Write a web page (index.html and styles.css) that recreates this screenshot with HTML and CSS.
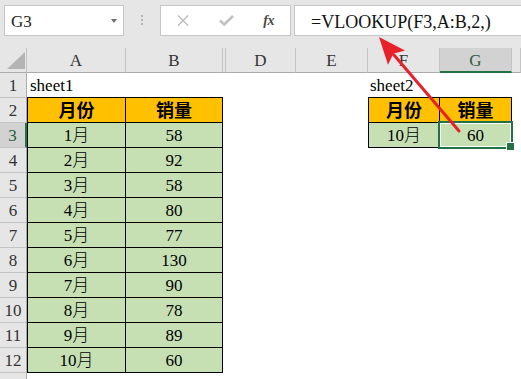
FILE: index.html
```html
<!DOCTYPE html>
<html lang="zh">
<head>
<meta charset="utf-8">
<title>VLOOKUP</title>
<link rel="stylesheet" href="styles.css">
</head>
<body>
<div class="app">
  <div class="fbar">
    <div class="namebox"><span class="nb-text">G3</span><span class="nb-arrow"></span></div>
    <div class="grip"><i></i><i></i><i></i></div>
    <div class="btns">
      <span class="slot"><svg width="12" height="11" viewBox="0 0 12 11"><path d="M1 0.5L11 10.5M11 0.5L1 10.5" stroke="#bdbdbd" stroke-width="1.4" fill="none"/></svg></span>
      <span class="slot"><svg width="15" height="11" viewBox="0 0 15 11"><path d="M1 5.5L5.2 9.5L14 1" stroke="#c2c2c2" stroke-width="2.6" fill="none"/></svg></span>
      <span class="slot fx">fx</span>
    </div>
    <div class="formula">=VLOOKUP(F3,A:B,2,)</div>
  </div>

  <div class="sheet">
    <div class="row colhead">
      <div class="rh corner"><svg width="18" height="17" viewBox="0 0 18 17"><path d="M0 17L18 17L18 0Z" fill="#b4b4b4"/></svg></div>
      <div class="hd ca">A</div>
      <div class="hd cb">B</div>
      <div class="hd cc"></div>
      <div class="hd cd">D</div>
      <div class="hd ce">E</div>
      <div class="hd cf">F</div>
      <div class="hd cg hsel">G</div>
      <div class="hd cx"></div>
    </div>

    <div class="row">
      <div class="rh">1</div>
      <div class="c ca tb lt">sheet1</div>
      <div class="c cb tb"></div>
      <div class="c cc"></div><div class="c cd"></div><div class="c ce"></div>
      <div class="c cf tb lt2">sheet2</div>
      <div class="c cg tb"></div>
      <div class="c cx"></div>
    </div>

    <div class="row">
      <div class="rh">2</div>
      <div class="c ca t tl h">月份</div>
      <div class="c cb t h">销量</div>
      <div class="c cc"></div><div class="c cd"></div><div class="c ce"></div>
      <div class="c cf t tl h">月份</div>
      <div class="c cg t h">销量</div>
      <div class="c cx"></div>
    </div>

    <div class="row">
      <div class="rh rsel">3</div>
      <div class="c ca t tl g">1月</div>
      <div class="c cb t g">58</div>
      <div class="c cc"></div><div class="c cd"></div><div class="c ce"></div>
      <div class="c cf t tl g">10月</div>
      <div class="c cg t g active">60<span class="selbox"></span></div>
      <div class="c cx"></div>
    </div>

    <div class="row"><div class="rh">4</div><div class="c ca t tl g">2月</div><div class="c cb t g">92</div><div class="c cc"></div><div class="c cd"></div><div class="c ce"></div><div class="c cf"></div><div class="c cg"></div><div class="c cx"></div></div>
    <div class="row"><div class="rh">5</div><div class="c ca t tl g">3月</div><div class="c cb t g">58</div><div class="c cc"></div><div class="c cd"></div><div class="c ce"></div><div class="c cf"></div><div class="c cg"></div><div class="c cx"></div></div>
    <div class="row"><div class="rh">6</div><div class="c ca t tl g">4月</div><div class="c cb t g">80</div><div class="c cc"></div><div class="c cd"></div><div class="c ce"></div><div class="c cf"></div><div class="c cg"></div><div class="c cx"></div></div>
    <div class="row"><div class="rh">7</div><div class="c ca t tl g">5月</div><div class="c cb t g">77</div><div class="c cc"></div><div class="c cd"></div><div class="c ce"></div><div class="c cf"></div><div class="c cg"></div><div class="c cx"></div></div>
    <div class="row"><div class="rh">8</div><div class="c ca t tl g">6月</div><div class="c cb t g">130</div><div class="c cc"></div><div class="c cd"></div><div class="c ce"></div><div class="c cf"></div><div class="c cg"></div><div class="c cx"></div></div>
    <div class="row"><div class="rh">9</div><div class="c ca t tl g">7月</div><div class="c cb t g">90</div><div class="c cc"></div><div class="c cd"></div><div class="c ce"></div><div class="c cf"></div><div class="c cg"></div><div class="c cx"></div></div>
    <div class="row"><div class="rh">10</div><div class="c ca t tl g">8月</div><div class="c cb t g">78</div><div class="c cc"></div><div class="c cd"></div><div class="c ce"></div><div class="c cf"></div><div class="c cg"></div><div class="c cx"></div></div>
    <div class="row"><div class="rh">11</div><div class="c ca t tl g">9月</div><div class="c cb t g">89</div><div class="c cc"></div><div class="c cd"></div><div class="c ce"></div><div class="c cf"></div><div class="c cg"></div><div class="c cx"></div></div>
    <div class="row"><div class="rh">12</div><div class="c ca t tl g">10月</div><div class="c cb t g">60</div><div class="c cc"></div><div class="c cd"></div><div class="c ce"></div><div class="c cf"></div><div class="c cg"></div><div class="c cx"></div></div>
    <div class="row"><div class="rh"></div><div class="c ca"></div><div class="c cb"></div><div class="c cc"></div><div class="c cd"></div><div class="c ce"></div><div class="c cf"></div><div class="c cg"></div><div class="c cx"></div></div>
  </div>

  <svg class="arrow" width="521" height="379" viewBox="0 0 521 379">
    <line x1="459" y1="131" x2="394" y2="55" stroke="#e8202a" stroke-width="3" stroke-linecap="round"/>
    <polygon points="379,37 405,50.5 393.3,53.8 388,64.7" fill="#e8202a"/>
  </svg>
</div>
</body>
</html>
```

FILE: styles.css
```css
* { box-sizing: border-box; margin: 0; padding: 0; }

html, body {
  width: 521px;
  height: 379px;
  overflow: hidden;
  background: #ffffff;
}

body {
  font-family: "Liberation Serif", "Noto Sans CJK SC", serif;
  color: #000;
}

.app {
  position: relative;
  width: 521px;
  height: 379px;
  overflow: hidden;
}

/* formula bar */
.fbar {
  height: 48px;
  background: #e6e6e6;
  display: flex;
  align-items: flex-start;
  padding: 5px 0 0 4px;
}

.namebox {
  width: 120px;
  height: 31px;
  flex: none;
  background: #fff;
  border: 1px solid #c6c6c6;
  display: flex;
  align-items: flex-start;
  padding: 0 6px 0 6px;
}

.nb-text {
  font-size: 17px;
  line-height: 24px;
  padding-top: 4px;
  color: #222;
}

.nb-arrow {
  margin-left: auto;
  margin-top: 13px;
  width: 0;
  height: 0;
  border-left: 3.5px solid transparent;
  border-right: 3.5px solid transparent;
  border-top: 4px solid #6e6e6e;
}

.grip {
  width: 36px;
  flex: none;
  display: flex;
  flex-direction: column;
  align-items: center;
  gap: 2px;
  padding-top: 10px;
}

.grip i {
  display: block;
  width: 2px;
  height: 2px;
  background: #b3b3b3;
}

.btns {
  width: 131px;
  height: 31px;
  flex: none;
  background: #fff;
  border: 1px solid #c6c6c6;
  display: flex;
  padding-left: 1px;
}

.slot {
  width: 43px;
  height: 29px;
  display: flex;
  align-items: center;
  justify-content: center;
}

.fx {
  font-style: italic;
  font-size: 14px;
  color: #4a4a4a;
  font-weight: bold;
  letter-spacing: -0.5px;
}

.formula {
  flex: 1;
  height: 31px;
  margin-left: 3px;
  background: #fff;
  border: 1px solid #c6c6c6;
  border-right: none;
  font-size: 18px;
  line-height: 22px;
  padding: 5px 0 0 16px;
  color: #111;
  white-space: nowrap;
}

/* sheet */
.row {
  display: flex;
  height: 25px;
}

.row > div {
  flex: none;
  height: 25px;
  font-size: 17px;
  line-height: 20px;
  padding-top: 3px;
  white-space: nowrap;
}

.rh {
  width: 27px;
  background: #e6e6e6;
  border-right: 1px solid #ababab;
  border-bottom: 1px solid #c4c4c4;
  text-align: center;
  color: #333;
}

.corner {
  border-bottom: 1px solid #ababab;
  border-right: 1px solid #c4c4c4;
  position: relative;
}

.corner svg {
  display: block;
  margin: 1px 0 0 7px;
}

.rsel {
  background: #d2d2d2;
  border-right: 2px solid #217346;
  color: #2b5c42;
}

.hd {
  background: #e6e6e6;
  border-right: 1px solid #c4c4c4;
  border-bottom: 1px solid #ababab;
  text-align: center;
  color: #333;
}

.hsel {
  background: #d2d2d2;
  border-bottom: 2px solid #217346;
  color: #2b5c42;
}

.ca { width: 99px; }
.cb { width: 97px; }
.cc { width: 3px; }
.cd { width: 70px; }
.ce { width: 72px; }
.cf { width: 72px; }
.cg { width: 72px; }
.row > .cx { flex: 1; }

.tb { border-bottom: 1px solid #000; }
.lt { padding-left: 3px; }
.lt2 { padding-left: 2px; }

.t {
  text-align: center;
  border-right: 1px solid #000;
  border-bottom: 1px solid #000;
}

.tl { border-left: 1px solid #000; }

.g {
  background: #c6e0b4;
  font-weight: 300;
}

.row > .h {
  background: #ffc000;
  font-weight: bold;
  font-size: 18px;
}

.active { position: relative; }

.selbox {
  position: absolute;
  left: -2px;
  top: -2px;
  right: -2px;
  bottom: -2px;
  border: 2px solid #217346;
  box-shadow: inset 0 0 0 1px #fff;
  z-index: 2;
}

.selbox::after {
  content: "";
  position: absolute;
  right: -4px;
  bottom: -4px;
  width: 7px;
  height: 7px;
  background: #217346;
  border: 1px solid #fff;
}

.arrow {
  position: absolute;
  left: 0;
  top: 0;
  z-index: 5;
  pointer-events: none;
}
```
